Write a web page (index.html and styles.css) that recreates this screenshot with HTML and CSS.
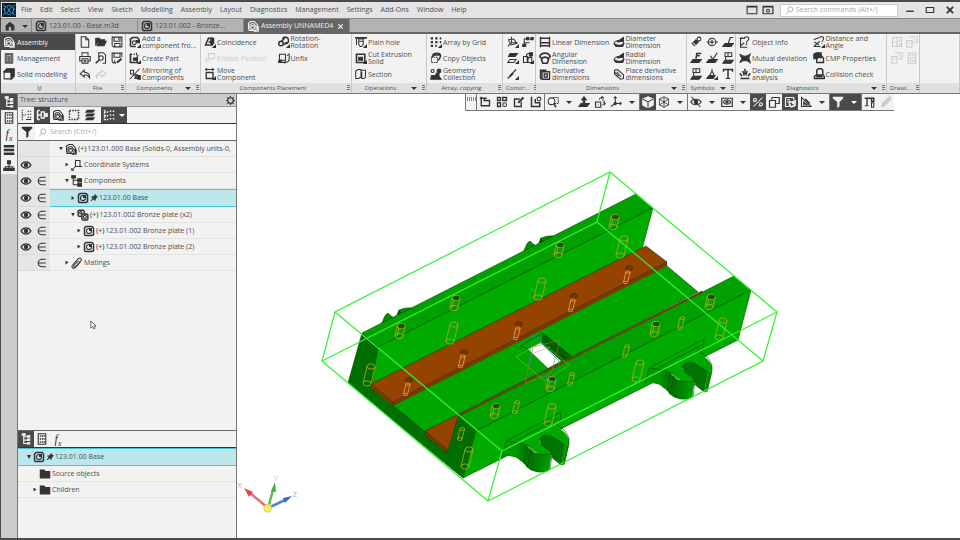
FILE: index.html
```html
<!DOCTYPE html>
<html lang="en">
<head>
<meta charset="utf-8">
<title>Assembly UNNAMED4</title>
<link rel="stylesheet" href="styles.css">
</head>
<body>
<svg class="defs" aria-hidden="true">
<symbol id="asm" viewBox="0 0 16 16"><path d="M2 13V4l3-2h5l4 5v7M4 14V6l2-1h3l3 4v5H2z"/><circle cx="7.500" cy="10" r="2.500"/><path d="M12 9h3v6H9" /></symbol>
<symbol id="part" viewBox="0 0 16 16"><path stroke-width="2" d="M4 2h8l2 2v9l-2 1H3l-1-2V4z"/><circle cx="8" cy="8" r="3.400"/><path fill="currentColor" stroke="none" d="M8 4h4v4H8z"/></symbol>
<symbol id="parts" viewBox="0 0 16 16"><rect x="1.500" y="1.500" width="8" height="8" rx="1.500" stroke-width="2"/><circle cx="5" cy="5" r="1.500"/><rect x="6.500" y="6.500" width="8" height="8" rx="1.500" stroke-width="2" fill="#eee"/><circle cx="10.500" cy="10.500" r="2"/></symbol>
<symbol id="mgmt" viewBox="0 0 16 16"><path fill="currentColor" opacity=".75" d="M3 2h10v13H3z"/><path stroke="#ddd" stroke-width="1" d="M5 5h6M5 8h2M9 8h2M5 11h2M9 11h2"/></symbol>
<symbol id="solid" viewBox="0 0 16 16"><path fill="currentColor" d="M1 5l4-4h10v10l-4 4V5z"/><path fill="#f2f2f2" d="M1.500 5.500h9v9h-9z"/></symbol>
<symbol id="home" viewBox="0 0 16 16"><path fill="currentColor" stroke="none" d="M8 1l7 6v8h-5v-4a2 2 0 0 0-4 0v4H1V7z"/></symbol>
<symbol id="new" viewBox="0 0 16 16"><path d="M3 1h6l4 4v10H3zM9 1v4h4"/></symbol>
<symbol id="open" viewBox="0 0 16 16"><path fill="currentColor" d="M1 13V3h5l1 2h6v2H5l-2 6h9l3-6H5"/></symbol>
<symbol id="save" viewBox="0 0 16 16"><path d="M1.500 1.500h13v13h-11l-2-2zM4 2v5h8V2M5 14v-4h7v4M10 3v2"/></symbol>
<symbol id="print" viewBox="0 0 16 16"><path d="M4 5V1h8v4M4 12H1V6h14v6h-3M4 9h8v6H4zM6 11h4M6 13h4"/></symbol>
<symbol id="preview" viewBox="0 0 16 16"><path d="M5 7V1h6l3 3v11h-4"/><circle cx="8" cy="8" r="3"/><path stroke-width="2.200" d="M6 10l-5 5"/></symbol>
<symbol id="saveas" viewBox="0 0 16 16"><path d="M7 14.500H3l-1.500-2v-11h13V7M4 2v5h8V2M5 14v-3"/><path stroke-width="3" d="M8 14l6-5"/></symbol>
<symbol id="undo" viewBox="0 0 16 16"><path d="M7 3L1.500 7.500 7 12V9.500c4-1 6 1 7 3.500 1-4-2-7-7-7.500z"/></symbol>
<symbol id="redo" viewBox="0 0 16 16"><path d="M9 3l5.500 4.500L9 12V9.500c-4-1-6 1-7 3.500-1-4 2-7 7-7.500z"/></symbol>
<symbol id="addc" viewBox="0 0 16 16"><path stroke-width="2.200" d="M2 14V4l3-2h6l2 2v2M2 14h7"/><circle cx="7" cy="9" r="2.500"/><path fill="currentColor" d="M10 6h4v3h-4zM15.500 12v3.500H12z"/></symbol>
<symbol id="addp" viewBox="0 0 16 16"><path stroke-width="2.200" d="M4 3H2v11h9V6"/><path d="M10 1v3M6 4l2-2M13 5h-3"/><path fill="currentColor" d="M6 8h4v3H6zM15.500 12v3.500H12z"/></symbol>
<symbol id="mirror" viewBox="0 0 16 16"><path d="M1 15L14 1M2 3h4v5H2z"/><path fill="currentColor" d="M8 9h3v2H8zM8 13h3v1H8zM12 10h3v5h-3z"/></symbol>
<symbol id="coin" viewBox="0 0 16 16"><path stroke-width="2.200" d="M2 12L6 3h5v9zM6 8h4"/><path fill="currentColor" d="M9 3h4v7H9zM15.500 12v3.500H12z"/></symbol>
<symbol id="fix" viewBox="0 0 16 16"><path d="M6 2h8v7H6zM3 14V9h3M6 12h3"/></symbol>
<symbol id="move" viewBox="0 0 16 16"><path d="M3 6h9v8H3z" stroke-width="1.800"/><path d="M2 2h11M4 .5L2 2l2 1.500M11 .5L13 2l-2 1.500"/><path fill="currentColor" d="M15.500 12v3.500H12z"/></symbol>
<symbol id="rot" viewBox="0 0 16 16"><circle cx="4" cy="10" r="3" stroke-width="2"/><path stroke-width="2" d="M6 4c2-4 8-3 8 2 0 4-3 5-6 4M5 7l4-5M7 12l5-4"/><path fill="currentColor" d="M15.500 12v3.500H12z"/></symbol>
<symbol id="unfix" viewBox="0 0 16 16"><path d="M2 3h8v8H2zM10 12l-2 2 2 1M3 14h5c5 0 7-1 7-6V3M12 5l3-3"/><path fill="currentColor" d="M1 11h4v3H1z"/></symbol>
<symbol id="hole" viewBox="0 0 16 16"><path d="M1 2h4v9l2 3h2l2-3V2h4M5 4h6M5 7h6M2 3v9"/><path fill="currentColor" d="M1 2h14v1H1zM15.500 12v3.500H12z"/></symbol>
<symbol id="cut" viewBox="0 0 16 16"><path stroke-width="2.200" d="M2 3h11v11H2z"/><path fill="currentColor" d="M5 7h5v4H5z"/><path fill="currentColor" d="M15.500 12v3.500H12z"/></symbol>
<symbol id="section" viewBox="0 0 16 16"><path d="M1 4l3-2h4v10l-3 2H1zM8 3h6v9l-2 2H9V5"/></symbol>
<symbol id="array" viewBox="0 0 16 16"><path stroke-width="3" stroke-dasharray="3 3" d="M1 3h14M1 8h14M1 13h8"/><path fill="currentColor" d="M15.500 12v3.500H12z"/></symbol>
<symbol id="copy" viewBox="0 0 16 16"><path stroke-dasharray="2 1" d="M2 7h8v7H2z"/><path stroke-width="2" d="M3 5c2-4 11-5 11 0 0 3-1 4-3 6M2 7l4-3h8"/></symbol>
<symbol id="geo" viewBox="0 0 16 16"><circle cx="3.500" cy="4" r="2"/><circle cx="12" cy="4" r="2.500" fill="currentColor"/><path fill="currentColor" d="M2 10h6V7h4v4l3 4H1z"/></symbol>
<symbol id="csys" viewBox="0 0 16 16"><path d="M6 2h6v8H6zM6 10l-5 5M6 10h9M6 10V1"/><path d="M1 12v3h3"/></symbol>
<symbol id="ctree" viewBox="0 0 16 16"><path d="M3 1v12h6M3 7h6"/><path fill="currentColor" d="M1 1h5v3H1zM9 5h5v4H9zM9 11h5v4H9z"/></symbol>
<symbol id="planes" viewBox="0 0 16 16"><path fill="currentColor" d="M4 2h10l-3 4H2z"/><path d="M4 10h8l-3 4H1z"/><path fill="currentColor" d="M15.500 12v3.500H12z"/></symbol>
<symbol id="plane3" viewBox="0 0 16 16"><path d="M2 5l7-1 4 6-8 2zM6 1v8l-5 5M6 9h8"/><path fill="currentColor" d="M15.500 12v3.500H12z"/></symbol>
<symbol id="branch" viewBox="0 0 16 16"><path d="M3 14V4h10M3 9h7"/><path fill="currentColor" d="M6 2h3v3H6zM12 2h3v3h-3zM1 11h4v3H1z"/></symbol>
<symbol id="shapes" viewBox="0 0 16 16"><path d="M2 6h5v8H2zM8 7h5v7H8z"/><circle cx="9" cy="5" r="3"/><path fill="currentColor" d="M10 1h4v4h-4zM15.500 12v3.500H12z"/></symbol>
<symbol id="axis" viewBox="0 0 16 16"><path stroke-width="1.500" d="M1 14L12 2"/><path stroke-width="2.600" d="M4 11l4-4"/><path fill="currentColor" d="M15.500 12v3.500H12z"/></symbol>
<symbol id="lin" viewBox="0 0 16 16"><path stroke-width="1.800" d="M2 1v14M14 1v14M2 3h12v6H2zM2 13h12"/></symbol>
<symbol id="ang" viewBox="0 0 16 16"><path stroke-width="2.200" d="M1 6c2-6 12-6 14 0l-3 3c-2-3-6-3-8 0zM3 9l2 6h6l2-6"/></symbol>
<symbol id="der" viewBox="0 0 16 16"><path stroke-width="1.800" d="M1 3h9M4 5h10v10H4zM2 3v12M7 8h4v4H7z"/></symbol>
<symbol id="dia" viewBox="0 0 16 16"><ellipse cx="8" cy="10" rx="6.500" ry="4"/><path fill="currentColor" d="M2 10c3 3 9 3 12 0l-1 4H4zM5 8l9-6v5z"/></symbol>
<symbol id="place" viewBox="0 0 16 16"><path d="M2 8V3l4-1 8 7v5l-4 1zM5 5l6 7M2 5l6 6"/></symbol>
<symbol id="thread" viewBox="0 0 16 16"><path stroke-width="6" d="M4 12l6-6"/><path stroke="#eee" d="M4 9l4 4"/><circle cx="12" cy="4" r="2.500"/></symbol>
<symbol id="datum" viewBox="0 0 16 16"><circle cx="8" cy="8" r="5"/><path stroke-width="1.600" d="M1 8h10M12 8h4M8 5v6"/></symbol>
<symbol id="weld" viewBox="0 0 16 16"><path stroke-width="2" d="M8 9l1-7h6M9 5h4"/><path fill="currentColor" d="M1 14l3-4h11l-3 4z"/></symbol>
<symbol id="rough" viewBox="0 0 16 16"><path stroke-width="1.600" d="M6 5l3 5 6-9"/><path fill="currentColor" d="M1 14l3-4h11l-3 4z"/></symbol>
<symbol id="lead" viewBox="0 0 16 16"><path stroke-width="1.600" d="M8 11l3-9h4"/><path fill="currentColor" d="M1 14l3-4h11l-3 4z"/></symbol>
<symbol id="tol" viewBox="0 0 16 16"><path d="M4 1h9v5H4zM8 1v5M5 6v5"/><path fill="currentColor" d="M1 15l3-4h11l-3 4z"/></symbol>
<symbol id="tri" viewBox="0 0 16 16"><path d="M8 1v3M5 10l3-6 3 6"/><path fill="currentColor" d="M1 14l3-4h8l-2 4zM15.500 12v3.500H12z"/></symbol>
<symbol id="text" viewBox="0 0 16 16"><path stroke-width="2" d="M2 5V2h12v3M8 2v12"/><path d="M5 14h6"/></symbol>
<symbol id="info" viewBox="0 0 16 16"><path d="M2 3v12h9M2 13l5-4M7 4c0-4 6-4 6 0 0 2-3 2-3 5M4 3h4"/><path stroke-width="2" d="M10 10v2M1 3h4"/></symbol>
<symbol id="mutual" viewBox="0 0 16 16"><path fill="currentColor" d="M1 3c5 4 9 4 14 0l-2 5 2 6c-5-4-9-4-14 0l3-5z"/></symbol>
<symbol id="devi" viewBox="0 0 16 16"><path stroke-width="2" d="M2 14h12M4 11L1 7M7 10L5 4M9 10l2-6M12 11l3-4M8 8V1"/></symbol>
<symbol id="dist" viewBox="0 0 16 16"><path d="M1 5l7-3M1 14l8-7M1 14h9M9 3c1-4 6-2 5 1 0 2-2 2-2 4M12 9v1M2 8l6 4"/><path fill="currentColor" d="M15.500 12v3.500H12z"/></symbol>
<symbol id="cmp" viewBox="0 0 16 16"><path stroke-width="1.800" d="M5 14V4h5l4 4v6z"/><path fill="currentColor" d="M1 3l3-2h7v7L8 7 6 9H1z"/></symbol>
<symbol id="coll" viewBox="0 0 16 16"><path stroke-width="2" d="M5 9V3l2-2h4l2 2v6l2 2v3H2v-3l3-2"/><path fill="currentColor" d="M5 9h7v3H5z"/></symbol>
<symbol id="view" viewBox="0 0 16 16"><path d="M2 2h12v12H2zM2 8h6V2M8 8v6M11 5v3M10 11h4"/></symbol>
<symbol id="view2" viewBox="0 0 16 16"><path d="M5 1h10v8H9M1 6h7v9H1zM3 9h3M10 3l3 3"/></symbol>
<symbol id="filter" viewBox="0 0 16 16"><path fill="currentColor" stroke="none" d="M1 1h14v2l-5 5v6l-3 2V8L1 3z"/></symbol>
<symbol id="loupe" viewBox="0 0 16 16"><circle cx="9.500" cy="6" r="4.500"/><path d="M6.500 9.500L2 15"/></symbol>
<symbol id="gear" viewBox="0 0 16 16"><circle cx="8" cy="8" r="5" stroke-width="2"/><path stroke-width="2" d="M8 0v3M8 13v3M0 8h3M13 8h3M2.500 2.500l2 2M11.500 11.500l2 2M13.500 2.500l-2 2M4.500 11.500l-2 2"/></symbol>
<symbol id="hier" viewBox="0 0 16 16"><path stroke-width="1.600" d="M5 1v13h6M5 5h6M5 9.500h6"/><path fill="currentColor" d="M3 1h4v2H3zM10 3.500h3v2h-3zM10 8h3v2h-3zM10 13h3v1.500h-3z"/></symbol>
<symbol id="dtree" viewBox="0 0 16 16"><path stroke-dasharray="2 1" d="M3 1v14M3 8h5"/><path d="M10 3h2M13 3h2M10 7h2M13 7h2M10 11h2M13 11h2M8 14h7"/></symbol>
<symbol id="ptree" viewBox="0 0 16 16"><path stroke-width="2" d="M2 2v12M2 8h5M2 14h3M2 2h3"/><path stroke-width="1.800" d="M7 4h4v8H7z"/><path fill="currentColor" d="M12 6h3v4h-3z"/></symbol>
<symbol id="dashbox" viewBox="0 0 16 16"><path stroke-width="2" stroke-dasharray="2 1.500" d="M2 2h12v12H2z"/></symbol>
<symbol id="layers" viewBox="0 0 16 16"><path fill="currentColor" stroke="none" d="M4 1h11l-3 4H1zM4 6h11l-3 4H1zM4 11h11l-3 4H1z"/></symbol>
<symbol id="list" viewBox="0 0 16 16"><path stroke-width="1.800" stroke-dasharray="2 1" d="M2 1v14M2 4h5M2 9h5M2 14h5"/><path stroke-width="1.800" d="M9 3h2M13 3h2M9 8h2M13 8h2M9 13h2M13 13h2"/></symbol>
<symbol id="sheet" viewBox="0 0 16 16"><path d="M3 1h10v14H3z"/><path stroke-width="2" stroke-dasharray="2 1" d="M5 4h7M5 8h7M5 12h7"/></symbol>
<symbol id="bars" viewBox="0 0 16 16"><path stroke-width="3.500" d="M1 3h14M1 8h14M1 13h14"/></symbol>
<symbol id="org" viewBox="0 0 16 16"><path d="M8 4v5M3 12V9h10v3"/><path fill="currentColor" d="M6 1h4v4H6zM1 11h4v3H1zM6 11h4v3H6zM11 11h4v3h-4zM8 8v4"/></symbol>
<symbol id="eye" viewBox="0 0 16 16"><path stroke-width="1.800" d="M1.500 8c3-5.500 10-5.500 13 0-3 5.500-10 5.500-13 0z"/><circle cx="8" cy="8" r="2.200" fill="currentColor"/></symbol>
<symbol id="eyeoff" viewBox="0 0 16 16"><path d="M1 8c3-5 11-5 14 0-3 5-11 5-14 0zM2 1l12 14"/><circle cx="8" cy="8" r="2.200" fill="currentColor"/></symbol>
<symbol id="eyebox" viewBox="0 0 16 16"><path stroke-width="1.600" d="M1 3h14v11H1zM3 8c2-4 8-4 10 0-2 4-8 4-10 0z"/><circle cx="8" cy="8" r="1.500" fill="currentColor"/></symbol>
<symbol id="elem" viewBox="0 0 16 16"><path stroke-width="1.600" d="M13 3H8a5 5 0 0 0 0 10h5M3 8h10"/></symbol>
<symbol id="pin" viewBox="0 0 16 16"><path fill="currentColor" d="M10 1l5 5-2 1-2 3-1 3-3-3-5 4 4-6-3-2 4-1 2-2z"/></symbol>
<symbol id="clip" viewBox="0 0 16 16"><path d="M13 6l-7 8c-3 3-6-1-4-3l8-9c3-2 5 1 3 3l-7 8c-2 1-3-1-2-2l6-6"/></symbol>
<symbol id="folder" viewBox="0 0 16 16"><path fill="currentColor" stroke="none" d="M1 2h6l2 2h6v10H1z"/></symbol>
<symbol id="l1" viewBox="0 0 16 16"><path stroke-width="1.800" d="M3 1v12h11V6H7V3M1 3h9"/></symbol>
<symbol id="l2" viewBox="0 0 16 16"><path stroke-width="1.800" d="M2 2h4v4H2zM9 2h5v4H9zM2 9h4v5H2z"/><circle cx="11.500" cy="11.500" r="2.500"/></symbol>
<symbol id="l3" viewBox="0 0 16 16"><path stroke-width="1.800" d="M9 4H2v10h9V8"/><path stroke-width="2.500" d="M7 9l7-7"/></symbol>
<symbol id="l4" viewBox="0 0 16 16"><path stroke-width="2" d="M2 1v13h11V9H7V4"/><circle cx="12" cy="4" r="2.500"/></symbol>
<symbol id="zoomr" viewBox="0 0 16 16"><circle cx="6" cy="7" r="4.500"/><path stroke-dasharray="2 1" d="M8 2h7v8H9"/><path stroke-width="2" d="M9 10l3 5"/></symbol>
<symbol id="orient" viewBox="0 0 16 16"><path fill="currentColor" d="M8 1l3 4H9v5h6l-3 4H1l3-4h3V5H5z"/></symbol>
<symbol id="rotv" viewBox="0 0 16 16"><path stroke-width="1.500" d="M2 8h7v7H2zM5 11h1M9 3l2-2 2 2M13 8l2 2-2 2"/><path stroke-dasharray="2 1" d="M7 5c0-3 5-3 5 1 3 1 2 6-1 6"/></symbol>
<symbol id="axes" viewBox="0 0 16 16"><path d="M7 1v9l-6 4M7 10h8M5 3l2-2 2 2M13 8l2 2-2 2"/><circle cx="7" cy="10" r="1.500" fill="currentColor"/></symbol>
<symbol id="cubef" viewBox="0 0 16 16"><path fill="currentColor" d="M8 1l7 3v8l-7 4-7-4V4z"/><path stroke="#444" d="M1 4l7 4 7-4M8 8v8"/></symbol>
<symbol id="cubew" viewBox="0 0 16 16"><path stroke-width="1.100" d="M8 1l6 3v8l-6 3-6-3V4zM2 4l6 4 6-4M8 8v7M8 1v7M2 12l6-4 6 4"/></symbol>
<symbol id="snap" viewBox="0 0 16 16"><path d="M2 14L14 2M2 8l3-2M9 13h4"/><circle cx="4" cy="5" r="2"/><circle cx="12" cy="11" r="2"/></symbol>
<symbol id="boxes" viewBox="0 0 16 16"><path stroke-width="1.600" d="M5 2h10v8h-4M5 2v3M2 6h8v9H2z"/></symbol>
<symbol id="clipv" viewBox="0 0 16 16"><path stroke-width="1.500" d="M2 2h11v3M2 2v12h5M4 5h4M4 8h2"/><path fill="currentColor" d="M7 7l3 1 5-2v7l-5 2-3-2z"/><path stroke="#444" d="M8 10l5 2M10 9v4"/></symbol>
<symbol id="meas" viewBox="0 0 16 16"><path d="M2 2v12h13zM5 8v4h5z"/><path stroke-width="2" d="M7 4l6 6"/></symbol>
<symbol id="caliper" viewBox="0 0 16 16"><path stroke-width="1.800" d="M1 3h13M4 3v9M10 4v3h3V4"/><path stroke-width="1.400" d="M10 9h3v6h-3zM1 13h5"/></symbol>
<symbol id="pick" viewBox="0 0 16 16"><path fill="currentColor" d="M2 14l1-4 6-6 3 3-6 6zM10 3l3-2 2 2-2 3z"/></symbol>
<symbol id="win" viewBox="0 0 16 16"><path d="M1.500 3h13v10h-13zM1 4h14"/></symbol>
<symbol id="winc" viewBox="0 0 16 16"><path stroke-width="1.600" d="M1.500 3h13v10h-13zM1 4h14"/><circle cx="8" cy="9" r="2"/></symbol>
<symbol id="min" viewBox="0 0 16 16"><path stroke-width="2.200" d="M2 10h12"/></symbol>
<symbol id="max" viewBox="0 0 16 16"><path stroke-width="1.800" d="M2 4h12v8H2z"/></symbol>
<symbol id="x" viewBox="0 0 16 16"><path stroke-width="2.800" d="M3 3l10 10M13 3L3 13"/></symbol>
<symbol id="more" viewBox="0 0 16 16"><path d="M3 3l5 4 5-4M3 8l5 4 5-4"/></symbol>
</svg>

<div class="app">
<header class="menubar">
  <svg class="logo" viewBox="0 0 14 14"><path fill="#101c26" d="M0 0h14v14H0z"/><circle cx="7" cy="7" r="4.500" fill="none" stroke="#1d8fc4" stroke-width="1.200"/><path stroke="#35b6ea" stroke-width=".8" fill="none" d="M1 2l3 2.500M1 12l3-2.500M13 2l-3 2.500M13 12l-3-2.500M5 4l4 6M9 4l-4 6M1 6h2M11 6h2"/></svg>
  <nav class="menu"><button>File</button><button>Edit</button><button>Select</button><button>View</button><button>Sketch</button><button>Modelling</button><button>Assembly</button><button>Layout</button><button>Diagnostics</button><button>Management</button><button>Settings</button><button>Add-Ons</button><button>Window</button><button>Help</button></nav>
  <div class="wintools"><button aria-label="Layout"><svg><use href="#win"/></svg></button><button aria-label="Show"><svg><use href="#winc"/></svg></button></div>
  <label class="cmd"><svg><use href="#loupe"/></svg><input type="text" placeholder="Search commands (Alt+/)" aria-label="Search commands"></label>
  <div class="winbtns"><button aria-label="Minimize"><svg><use href="#min"/></svg></button><button aria-label="Maximize"><svg><use href="#max"/></svg></button><button aria-label="Close"><svg><use href="#x"/></svg></button></div>
</header>

<nav class="tabs">
  <button class="home" aria-label="Home"><svg><use href="#home"/></svg><i class="dd"></i></button>
  <button class="tab"><svg><use href="#part"/></svg>123.01.00 - Base.m3d</button>
  <button class="tab"><svg><use href="#part"/></svg>123.01.002 - Bronze...</button>
  <button class="tab on"><svg><use href="#asm"/></svg>Assembly UNNAMED4<svg class="sm"><use href="#x"/></svg></button>
</nav>

<section class="ribbon">
  <div class="group modes"><div class="body"><button class="cmdb on"><svg><use href="#asm"/></svg>Assembly</button><button class="cmdb"><svg><use href="#mgmt"/></svg>Management</button><button class="cmdb"><svg><use href="#solid"/></svg>Solid modelling</button></div><footer><svg class="sm"><use href="#more"/></svg></footer></div>
  <div class="group"><div class="body c3"><button aria-label="New"><svg><use href="#new"/></svg></button><button aria-label="Open"><svg><use href="#open"/></svg></button><button aria-label="Save"><svg><use href="#save"/></svg></button><button aria-label="Print"><svg><use href="#print"/></svg></button><button aria-label="Preview"><svg><use href="#preview"/></svg></button><button aria-label="Save as"><svg><use href="#saveas"/></svg></button><button aria-label="Undo"><svg><use href="#undo"/></svg></button><button aria-label="Redo" disabled><svg><use href="#redo"/></svg></button></div><footer><span>File</span><i class="grip"></i></footer></div>
  <div class="group"><div class="body"><button class="cmdb"><svg><use href="#addc"/></svg><span>Add a<br>component fro...</span></button><button class="cmdb"><svg><use href="#addp"/></svg>Create Part</button><button class="cmdb"><svg><use href="#mirror"/></svg><span>Mirroring of<br>Components</span></button></div><footer><span>Components</span><i class="dd"></i><i class="grip"></i></footer></div>
  <div class="group"><div class="body c2"><button class="cmdb"><svg><use href="#coin"/></svg>Coincidence</button><button class="cmdb"><svg><use href="#rot"/></svg><span>Rotation-<br>Rotation</span></button><button class="cmdb" disabled><svg><use href="#fix"/></svg>Enable Fixation</button><button class="cmdb"><svg><use href="#unfix"/></svg>Unfix</button><button class="cmdb"><svg><use href="#move"/></svg><span>Move<br>Component</span></button></div><footer><span>Components Placement</span><i class="grip"></i></footer></div>
  <div class="group"><div class="body"><button class="cmdb"><svg><use href="#hole"/></svg>Plain hole</button><button class="cmdb"><svg><use href="#cut"/></svg><span>Cut Extrusion<br>Solid</span></button><button class="cmdb"><svg><use href="#section"/></svg>Section</button></div><footer><span>Operations</span><i class="dd"></i><i class="grip"></i></footer></div>
  <div class="group"><div class="body"><button class="cmdb"><svg><use href="#array"/></svg>Array by Grid</button><button class="cmdb"><svg><use href="#copy"/></svg>Copy Objects</button><button class="cmdb"><svg><use href="#geo"/></svg><span>Geometry<br>Collection</span></button></div><footer><span>Array, copying</span><i class="grip"></i></footer></div>
  <div class="group"><div class="body c2"><button aria-label="Coordinate system"><svg><use href="#plane3"/></svg></button><button aria-label="Branch"><svg><use href="#branch"/></svg></button><button aria-label="Plane"><svg><use href="#planes"/></svg></button><button aria-label="Shapes"><svg><use href="#shapes"/></svg></button><button aria-label="Axis"><svg><use href="#axis"/></svg></button></div><footer><span>Constr...</span><i class="grip"></i></footer></div>
  <div class="group"><div class="body c2"><button class="cmdb"><svg><use href="#lin"/></svg>Linear Dimension</button><button class="cmdb"><svg><use href="#dia"/></svg><span>Diameter<br>Dimension</span></button><button class="cmdb"><svg><use href="#ang"/></svg><span>Angular<br>Dimension</span></button><button class="cmdb"><svg><use href="#dia"/></svg><span>Radial<br>Dimension</span></button><button class="cmdb"><svg><use href="#der"/></svg><span>Derivative<br>dimensions</span></button><button class="cmdb"><svg><use href="#place"/></svg><span>Place derivative<br>dimensions</span></button></div><footer><span>Dimensions</span><i class="dd"></i><i class="grip"></i></footer></div>
  <div class="group"><div class="body c3"><button aria-label="Thread"><svg><use href="#thread"/></svg></button><button aria-label="Datum"><svg><use href="#datum"/></svg></button><button aria-label="Leader"><svg><use href="#lead"/></svg></button><button aria-label="Base"><svg><use href="#weld"/></svg></button><button aria-label="Roughness"><svg><use href="#rough"/></svg></button><button aria-label="Mark"><svg><use href="#tol"/></svg></button><button aria-label="Tolerance"><svg><use href="#tol"/></svg></button><button aria-label="Weld"><svg><use href="#tri"/></svg></button><button aria-label="Text"><svg><use href="#text"/></svg></button></div><footer><span>Symbols</span><i class="dd"></i><i class="grip"></i></footer></div>
  <div class="group"><div class="body c2"><button class="cmdb"><svg><use href="#info"/></svg>Object Info</button><button class="cmdb"><svg><use href="#dist"/></svg><span>Distance and<br>Angle</span></button><button class="cmdb"><svg><use href="#mutual"/></svg>Mutual deviation</button><button class="cmdb"><svg><use href="#cmp"/></svg>CMP Properties</button><button class="cmdb"><svg><use href="#devi"/></svg><span>Deviation<br>analysis</span></button><button class="cmdb"><svg><use href="#coll"/></svg>Collision check</button></div><footer><span>Diagnostics</span><i class="dd"></i><i class="grip"></i></footer></div>
  <div class="group"><div class="body c2"><button aria-label="View" disabled><svg><use href="#view"/></svg></button><button aria-label="Sheets" disabled><svg><use href="#view2"/></svg></button><button aria-label="Frame" disabled><svg><use href="#view2"/></svg></button><button aria-label="Report" disabled><svg><use href="#sheet"/></svg></button></div><footer><span>Drawi...</span><i class="grip"></i></footer></div>
  <div class="group"><div class="body"></div><footer></footer></div>
</section>

<main class="work">
  <nav class="rail"><button class="on" aria-label="Tree"><svg><use href="#hier"/></svg></button><button aria-label="Parameters"><svg><use href="#sheet"/></svg></button><button aria-label="Variables" class="fx"><span>f<sub>x</sub></span></button><button aria-label="Layers"><svg><use href="#bars"/></svg></button><button aria-label="Hierarchy"><svg><use href="#org"/></svg></button></nav>
  <aside class="panel">
    <div class="upper">
      <h2>Tree: structure<svg class="gear"><use href="#gear"/></svg></h2>
      <div class="tbar"><button aria-label="Flat"><svg><use href="#dtree"/></svg></button><button class="on" aria-label="Structure"><svg><use href="#ptree"/></svg></button><button aria-label="Assembly"><svg><use href="#asm"/></svg></button><button aria-label="Area"><svg><use href="#dashbox"/></svg></button><button aria-label="Layers"><svg><use href="#layers"/></svg></button><button class="on wide" aria-label="List"><svg><use href="#list"/></svg><i class="dd"></i></button></div>
      <div class="find"><button aria-label="Filter"><svg><use href="#filter"/></svg></button><label><svg><use href="#loupe"/></svg><input type="text" placeholder="Search (Ctrl+/)" aria-label="Search"></label></div>
      <ul class="tree">
        <li><span></span><span></span><div><i class="tw open"></i><svg><use href="#asm"/></svg><b>(+)</b>123.01.000 Base (Solids-0, Assembly units-0,</div></li>
        <li><span><svg><use href="#eye"/></svg></span><span></span><div class="d1"><i class="tw"></i><svg><use href="#csys"/></svg>Coordinate Systems</div></li>
        <li><span><svg><use href="#eye"/></svg></span><span><svg><use href="#elem"/></svg></span><div class="d1"><i class="tw open"></i><svg><use href="#ctree"/></svg>Components</div></li>
        <li class="sel"><span><svg><use href="#eye"/></svg></span><span><svg><use href="#elem"/></svg></span><div class="d2"><i class="tw"></i><svg><use href="#part"/></svg><svg class="sm"><use href="#pin"/></svg>123.01.00 Base</div></li>
        <li><span><svg><use href="#eye"/></svg></span><span><svg><use href="#elem"/></svg></span><div class="d2"><i class="tw open"></i><svg><use href="#parts"/></svg><b>(+)</b>123.01.002 Bronze plate (x2)</div></li>
        <li><span><svg><use href="#eye"/></svg></span><span><svg><use href="#elem"/></svg></span><div class="d3"><i class="tw"></i><svg><use href="#part"/></svg><b>(+)</b>123.01.002 Bronze plate (1)</div></li>
        <li><span><svg><use href="#eye"/></svg></span><span><svg><use href="#elem"/></svg></span><div class="d3"><i class="tw"></i><svg><use href="#part"/></svg><b>(+)</b>123.01.002 Bronze plate (2)</div></li>
        <li><span></span><span><svg><use href="#elem"/></svg></span><div class="d1"><i class="tw"></i><svg><use href="#clip"/></svg>Matings</div></li>
      </ul>
    </div>
    <div class="lower">
      <div class="tbar"><button class="on" aria-label="Relations"><svg><use href="#hier"/></svg></button><button aria-label="Parameters"><svg><use href="#sheet"/></svg></button><button class="fx" aria-label="Variables"><span>f<sub>x</sub></span></button></div>
      <ul class="tree plain">
        <li class="sel"><div><i class="tw open"></i><svg><use href="#part"/></svg><svg class="sm"><use href="#pin"/></svg>123.01.00 Base</div></li>
        <li><div class="d1"><i class="tw none"></i><svg><use href="#folder"/></svg>Source objects</div></li>
        <li><div class="d1"><i class="tw"></i><svg><use href="#folder"/></svg>Children</div></li>
      </ul>
    </div>
  </aside>
  <section class="stage">
    <svg class="scene" viewBox="237 94 723 444" preserveAspectRatio="xMinYMin meet" role="img" aria-label="Base assembly model">
      <defs>
        <linearGradient id="lug" x1="0" x2="1"><stop offset="0" stop-color="#009c00"/><stop offset=".3" stop-color="#009600"/><stop offset=".45" stop-color="#007c00"/><stop offset=".6" stop-color="#007400"/><stop offset=".85" stop-color="#009000"/><stop offset="1" stop-color="#00a400"/></linearGradient>
        <g id="short"><ellipse cx="1" cy="-5" rx="4" ry="2.600"/><ellipse cx="1.500" cy="-5" rx="3" ry="1.800" fill="#0a5c00" stroke="#333"/><ellipse cx="-1" cy="5" rx="4" ry="2.600"/><path d="M-3-5l-2 10M5-5L3 5M-1-3l-2 8"/></g>
        <g id="tall"><ellipse cx="2" cy="-8.500" rx="4" ry="2.600"/><ellipse cx="-2" cy="8.500" rx="4" ry="2.600"/><path d="M-2-8.500L-6 8.500M6-8.500L2 8.500"/></g>
        <g id="slim"><ellipse cx="1.300" cy="-5" rx="2.200" ry="1.500"/><ellipse cx="-1.300" cy="5" rx="2.200" ry="1.500"/><path d="M-1-5l-2.500 10M3.500-5L1 5"/></g>
        <g id="bolt"><ellipse rx="3.500" ry="2.200" fill="#7a3800" stroke="#4a2400"/><ellipse cx="-1" cy="4" rx="2.200" ry="1.200"/><ellipse cx="-3.500" cy="14.500" rx="2" ry="1.200"/><path d="M-3.200 4l-2.300 10.500M1.200 4l-2.700 10.500"/></g>
        <g id="foot" stroke-linejoin="round">
          <path fill="url(#lug)" d="M644 386l5-18 16 1 13 11 17 1-2 9-.5 7.500q-3.500 2-8 2-4 0-8.500-1.500-3-1-6.500-4-3-5-6-6-4-4-7-4-4-1.500-8-1z"/>
          <path fill="#00a700" d="M646 370l3-2 51-24v9l5 4q5 4 7 9v6l-4-1-15-8q-6-2-10 1-2 3 0 6l9 5q4 4 3 6-4 2-9 1-5-1-9-4-4-4-12-8l-10-1z"/>
          <path fill="#007400" stroke="#064806" stroke-width=".5" d="M682.500 367q1-4 4.500-4.500 4-.5 7 .5l14 8-4 21-8.700-7-.3-4q-1-3-5-5-7-4-7.500-9z"/>
          <path fill="#009500" d="M708 371l4 .5-4.500 20-3.500 1z"/>
          <path fill="none" stroke="#064806" stroke-width=".6" d="M649 368l55-29-1 11-3 2M649 368l-4 16M660 367l42-22M649 368l16 2q7 2 11 8 4 4 10 4 5 0 9-1.500M671 373l-4 18M674 376l-4 18M695 381l-2 16M700 352q10 5 12 14v5M712 371l-5 20"/>
        </g>
        <g id="backlug" fill="#009000" stroke="#064806" stroke-width=".5"><path d="M381 325l2-5q2-6 5-7l8 7v5z"/><path d="M395 320l4-10q6-3 15-2l6 3-20 11z"/><path fill="#005c00" d="M396 319l3-9 4 7z"/></g>
      </defs>
      <use href="#backlug"/><use href="#backlug" x="142" y="-72"/>
      <g stroke="#064806" stroke-width=".6" stroke-linejoin="round">
        <path fill="#00a000" d="M362 333l274-139 17 14-275 139z"/>
        <path fill="#00ab00" d="M378 347l275-139-11 41-271 137z"/>
        <path fill="#006e00" d="M362 333l16 14-7 39 22 19 32 26 34-15 17 14-13 48-115-95z"/>
        <path fill="#00a600" d="M393 405l274-139 31 26-273 140z"/>
        <path fill="#944400" d="M371 384l275-138 21 16-274 140z"/>
        <path fill="#7d3800" stroke="none" d="M371 384l22 18 274-140v4L393 406l-22-18z"/>
        <path fill="none" stroke="#4a2400" d="M371 384l22 18 274-140M393 402v4"/>
        <path fill="#8a3a00" d="M459 414l243-123v3L459 417z"/>
        <path fill="#7d3800" d="M425 431l22 18v4l-22-18z"/>
        <path fill="#944400" d="M425 431l34-17-11 36z"/>
        <path fill="#00a000" d="M459 416l275-140 17 14-275 141z"/>
        <path fill="#00ab00" d="M476 431l275-141-13 50-275 138z"/>
        <path fill="none" stroke="#a33008" d="M460 415l242-122"/>
        <path fill="none" d="M528 349l-8-3 23-13"/>
        <path fill="#006000" d="M543 333l28 23-10 5-19-18z"/>
        <path fill="#fff" stroke="none" d="M528 349l13-6 20 18-13 7z"/>
      </g>
      <use href="#foot"/><use href="#foot" x="-143" y="73"/>
      <g fill="none" stroke-width=".6"><path stroke="#7c0" d="M516 357l25-15 28 23-24 16z"/><path stroke="#b0703a" d="M525 383l8-36 27-7-9 34z"/><path stroke="#0a8cb0" d="M533 335l27 27-5 22-27-24z"/><path stroke="#e99" d="M534 353l16-6"/></g>
      <g fill="none" stroke="#b4a820" stroke-width=".8">
        <use href="#short" x="400" y="331"/><use href="#short" x="455" y="303"/><use href="#short" x="559" y="250"/><use href="#short" x="614" y="222"/><use href="#short" x="495" y="411"/><use href="#short" x="551" y="384"/><use href="#short" x="655" y="329"/><use href="#short" x="710" y="302"/>
        <use href="#tall" x="622" y="247"/><use href="#tall" x="540" y="289"/><use href="#tall" x="452" y="333"/><use href="#tall" x="369" y="375"/><use href="#tall" x="721" y="329"/><use href="#tall" x="638" y="371"/><use href="#tall" x="550" y="415"/><use href="#tall" x="467" y="458"/>
        <use href="#slim" x="681" y="323"/><use href="#slim" x="626" y="351"/><use href="#slim" x="571" y="379"/><use href="#slim" x="516" y="407"/><use href="#slim" x="461" y="434"/>
      </g>
      <g fill="none" stroke="#ee9350" stroke-width=".9"><use href="#bolt" x="629" y="268"/><use href="#bolt" x="574" y="296"/><use href="#bolt" x="519" y="324"/><use href="#bolt" x="464" y="352"/><use href="#bolt" x="409" y="380"/></g>
      <path fill="none" stroke="#2df52d" stroke-width="1.200" d="M610 172L335 312l-13 49 166 140 275-140 14-49zL597 222 322 361M597 222l166 139M335 312l167 139 275-139M502 451l-14 50"/>
      <g stroke-width="2.500"><path stroke="#e27070" d="M268 508l-18-15"/><path stroke="#5cb85c" d="M268 508l5-18"/><path stroke="#4d86c8" d="M268 508l17-8"/></g>
      <path fill="#d94a4a" d="M244 488l9 4-4 5z"/><path fill="#3fae4a" d="M275 482l1 10-5-1z"/><path fill="#3b66c8" d="M292 496l-7 7-2-5z"/><circle cx="267.700" cy="508.300" r="4" fill="#f4f06a" stroke="#c8c040" stroke-width=".6"/>
      <g class="axes"><text x="237.500" y="488" fill="#ee8f8f">X</text><text x="273.500" y="481" fill="#8fdc8f">Y</text><text x="292.500" y="497" fill="#8fb4ea">Z</text></g>
    </svg>
    <div class="float">
      <div class="g"><i class="handle"></i></div>
      <div class="g lay"><button aria-label="L1"><svg><use href="#l1"/></svg></button><button aria-label="L2"><svg><use href="#l2"/></svg></button><button aria-label="L3"><svg><use href="#l3"/></svg></button><button aria-label="L4"><svg><use href="#l4"/></svg></button></div>
      <div class="g"><button aria-label="Zoom"><svg><use href="#zoomr"/></svg></button><button class="drop" aria-label="Zoom menu"><i class="dd"></i></button><button aria-label="Normal to"><svg><use href="#orient"/></svg></button><button aria-label="Rotate"><svg><use href="#rotv"/></svg></button><button aria-label="Axes"><svg><use href="#axes"/></svg></button><button class="drop" aria-label="Axes menu"><i class="dd"></i></button></div>
      <div class="g"><button class="on" aria-label="Shaded"><svg><use href="#cubef"/></svg></button><button aria-label="Wire"><svg><use href="#cubew"/></svg></button><button class="drop" aria-label="Wire menu"><i class="dd"></i></button></div>
      <div class="g"><button aria-label="Hide"><svg><use href="#eyeoff"/></svg></button><button class="drop" aria-label="Hide menu"><i class="dd"></i></button><button aria-label="Show"><svg><use href="#eyebox"/></svg></button><button class="drop" aria-label="Show menu"><i class="dd"></i></button><button class="on" aria-label="Snap"><svg><use href="#snap"/></svg></button><button aria-label="Boxes"><svg><use href="#boxes"/></svg></button><button class="on" aria-label="Clip"><svg><use href="#clipv"/></svg></button><button aria-label="Measure"><svg><use href="#meas"/></svg></button><button class="drop" aria-label="Measure menu"><i class="dd"></i></button></div>
      <div class="g"><button class="on" aria-label="Filter"><svg><use href="#filter"/></svg></button><button class="on drop" aria-label="Filter menu"><i class="dd"></i></button></div>
      <div class="g"><button aria-label="Caliper"><svg><use href="#caliper"/></svg></button><button aria-label="Pick" disabled><svg><use href="#pick"/></svg></button></div>
    </div>
  </section>
</main>
<svg class="cursor" viewBox="0 0 8 12"><path d="M1 1v8l2-2 1.500 3 1.500-1-1.500-2.500H7z" fill="#fff" stroke="#333" stroke-width=".8"/></svg>
</div>
</body>
</html>
```
FILE: styles.css
```css
* { box-sizing: border-box; }
html, body { height: 100%; }
body {
  margin: 0;
  font: 7px/14px "Open Sans", "Noto Sans", sans-serif;
  color: #4d4d4d;
  background: #fff;
}
button, input { font: inherit; color: inherit; border: 0; padding: 0; margin: 0; background: none; }
button { display: flex; align-items: center; white-space: nowrap; }
svg { width: 12px; height: 12px; flex: none; fill: none; stroke: #333; color: #333; stroke-width: 1.4; }
svg.sm { width: 7px; height: 7px; }
.defs { position: absolute; width: 0; height: 0; }
button:disabled, button:disabled svg { color: #ccc; stroke: #ccc; }
.on, .on svg { background: #4a4a4a; color: #f2f2f2; }
.on svg { stroke: #f2f2f2; }
.dd { width: 0; height: 0; border: 3px solid transparent; border-top: 3px solid #333; border-bottom: 0; flex: none; }
.on .dd { border-top-color: #fff; }
input::placeholder { color: #a8a8a8; opacity: 1; }
input { min-width: 0; flex: 1; outline: 0; }

.app {
  display: grid;
  grid-template-rows: 17px 15px 60px 1fr;
  min-height: 100vh;
  border: solid #4a4a4a;
  border-width: 2px 0 2px 1px;
}

.menubar { display: flex; align-items: center; background: #e4e4e4; border-bottom: 1px solid #888; padding-left: 1px; }
.logo { width: 14px; height: 14px; stroke: none; }
.menu { display: flex; gap: 8px; margin: 0 auto 0 5px; }
.wintools { display: flex; gap: 4px; margin-right: 6px; }
.cmd { display: flex; align-items: center; gap: 2px; width: 118px; height: 13px; padding-left: 4px; background: #fff; border: 1px solid #ccc; }
.cmd svg, .find label svg { width: 9px; height: 9px; stroke: #999; }
.winbtns { display: flex; gap: 10px; padding: 0 5px 0 7px; }
.winbtns svg { width: 10px; height: 10px; }

.tabs { display: flex; background: #b3b3b3; border-bottom: 2px solid #666; }
.tabs button { padding-top: 1px; }
.home { width: 31px; gap: 7px; padding-left: 4px; border-right: 1px solid #888; }
.tabs .home svg { width: 10px; height: 10px; }
.tab { width: 106px; gap: 2px; padding-left: 3px; border-right: 1px solid #888; }
.tab.on { background: #666; }
.tab .sm { margin-left: 2px; }
.tab.on svg { background: none; }

.ribbon { display: grid; grid-template-columns: 75px 50px 75px 151px 75px 76px 33px 151px 49px 151px 33px 1fr; background: #f2f2f2; border-bottom: 1px solid #777; }
.group { border-right: 1px solid #c8c8c8; min-width: 0; }
.body { display: grid; grid-template-rows: repeat(3, 16px); height: 49px; padding-left: 3px; }
.c2 { grid-template-columns: 1fr 1fr; }
.c3 { grid-template-columns: repeat(3, 16px); padding-left: 1px; }
.body > button:not(.cmdb) { justify-content: center; }
.cmdb { gap: 1px; line-height: 7px; text-align: left; }
.modes .body { padding: 0; }
.modes .cmdb { padding-left: 2px; gap: 2px; }
.group footer { display: flex; align-items: center; height: 10px; gap: 5px; padding: 0 1px 0 3px; background: #e0e0e0; font-size: 6px; line-height: 10px; white-space: nowrap; }
.group footer span { flex: 1; text-align: center; }
.modes footer { justify-content: center; }
.grip { width: 3px; height: 6px; flex: none; background: repeating-linear-gradient(#777 0 1px, #e0e0e0 1px 2px); }

.work { display: grid; grid-template-columns: 17px 219px 1fr; min-height: 0; }
.rail { background: #ccc; border-right: 1px solid #777; }
.rail button, .tbar button { width: 16px; height: 16px; justify-content: center; background: #f2f2f2; }
.rail button.on, .tbar button.on { background: #4a4a4a; }
.on svg { background: none; }
.rail .fx, .tbar .fx { font: italic 12px/14px "Liberation Serif", serif; color: #333; }
.fx sub { font-size: 8px; line-height: 0; }
.panel { display: grid; grid-template-rows: 1fr 107px; background: #f2f2f2; border-right: 1px solid #777; min-width: 0; }
.upper { border-bottom: 1px solid #666; min-width: 0; }
.panel h2 { display: flex; justify-content: space-between; align-items: center; height: 13px; margin: 0; padding: 0 1px 0 2px; background: #ccc; font-size: 7px; font-weight: 400; border-bottom: 1px solid #999; }
.panel .gear { width: 9px; height: 9px; }
.tbar { display: flex; height: 17px; border-bottom: 1px solid #333; }
.tbar .wide { width: 26px; gap: 4px; margin-left: 3px; }
.find { display: flex; height: 17px; border-bottom: 1px solid #666; background: #fff; }
.find button { width: 17px; justify-content: center; background: #f2f2f2; }
.find label { display: flex; flex: 1; align-items: center; gap: 3px; padding-left: 3px; min-width: 0; }
.tree { margin: 0; padding: 0; list-style: none; }
.tree li { display: grid; grid-template-columns: 16px 16px minmax(0, 1fr); height: 16px; }
.tree span { display: flex; align-items: center; justify-content: center; background: #e6e6e6; border-bottom: 1px solid #dadada; }
.tree div { display: flex; align-items: center; gap: 1px; padding-left: 8px; border-bottom: 1px solid #e4e4e4; overflow: hidden; white-space: nowrap; }
.tree b { font-weight: 600; }
.tree .d1 { padding-left: 14px; }
.tree .d2 { padding-left: 20px; }
.tree .d3 { padding-left: 26px; }
.tree .sel { height: 18px; }
.tree .sel div { background: #bce8ec; border-top: 1px solid #4cc4d4; border-bottom: 1px solid #4cc4d4; }
.tree svg.sm { width: 8px; height: 8px; }
.tw { width: 6px; height: 4px; flex: none; background: #333; clip-path: polygon(25% 0, 75% 50%, 25% 100%); }
.tw.open { clip-path: polygon(15% 0, 85% 0, 50% 100%); }
.tw.none { background: none; }
.plain li { grid-template-columns: minmax(0, 1fr); }

.stage { position: relative; overflow: hidden; background: #fff; min-width: 0; }
.scene { display: block; width: 100%; height: 100%; stroke: none; }
.axes { font: 8px "Open Sans", sans-serif; }
.float { position: absolute; top: 0; left: 228px; display: flex; height: 17px; background: #f2f2f2; border-bottom: 1px solid #777; }
.g { display: flex; border-left: 1px solid #777; }
.g button { width: 16px; justify-content: center; }
.g .drop { width: 15px; }
.lay { gap: 1px; }
.handle { width: 10px; height: 4px; margin-top: 3px; background: repeating-linear-gradient(90deg, #f2f2f2 0 1px, #888 1px 2px); }
.cursor { position: absolute; left: 90px; top: 320px; width: 7px; height: 11px; }
```
